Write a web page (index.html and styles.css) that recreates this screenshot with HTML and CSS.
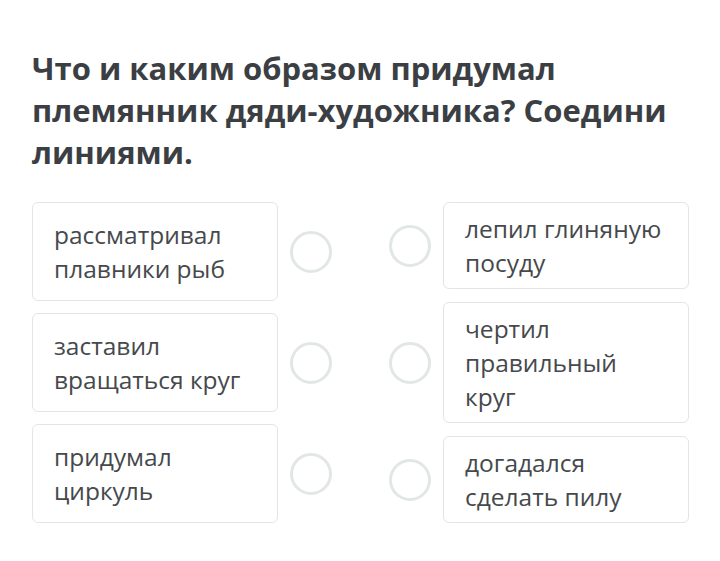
FILE: index.html
```html
<!DOCTYPE html>
<html lang="ru">
<head>
<meta charset="utf-8">
<link rel="stylesheet" href="styles.css">
</head>
<body>
<main class="task">
  <h1 class="question">Что и каким образом придумал племянник дяди-художника? Соедини линиями.</h1>
  <div class="board">
    <div class="column column-left">
      <div class="item">
        <div class="card card-left">рассматривал плавники рыб</div>
        <span class="dot"></span>
      </div>
      <div class="item">
        <div class="card card-left">заставил вращаться круг</div>
        <span class="dot"></span>
      </div>
      <div class="item">
        <div class="card card-left">придумал циркуль</div>
        <span class="dot"></span>
      </div>
    </div>
    <div class="column column-right">
      <div class="item">
        <span class="dot"></span>
        <div class="card card-right">лепил глиняную посуду</div>
      </div>
      <div class="item">
        <span class="dot"></span>
        <div class="card card-right">чертил правильный круг</div>
      </div>
      <div class="item">
        <span class="dot"></span>
        <div class="card card-right">догадался сделать пилу</div>
      </div>
    </div>
  </div>
</main>
</body>
</html>
```

FILE: styles.css
```css
html, body {
  margin: 0;
  padding: 0;
  background: #ffffff;
}

body {
  font-family: "Open Sans", "Noto Sans", sans-serif;
  color: #404448;
}

.task {
  padding: 47px 32px 0 32px;
}

.question {
  margin: 0;
  font-size: 31px;
  line-height: 42px;
  font-weight: 700;
  color: #3b3f44;
  width: 650px;
}

.board {
  display: flex;
  margin-top: 29px;
}

.column {
  display: flex;
  flex-direction: column;
  flex: none;
}

.column-left {
  gap: 12px;
  margin-right: 57px;
}

.column-right {
  justify-content: space-between;
}

.item {
  display: flex;
  align-items: center;
}

.card {
  box-sizing: border-box;
  width: 246px;
  border: 1px solid #e3e4e4;
  border-radius: 6px;
  padding: 9px 22px 8px 21px;
  font-size: 24.5px;
  line-height: 34px;
  color: #45494c;
  background: #ffffff;
}

.card-left {
  min-height: 99px;
  padding-top: 15px;
  padding-bottom: 14px;
}

.dot {
  box-sizing: border-box;
  width: 42px;
  height: 42px;
  border-radius: 50%;
  border: 3px solid #e2e6e6;
  flex: none;
}

.column-left .dot {
  margin-left: 12px;
}

.column-right .dot {
  margin-right: 12px;
}
```
